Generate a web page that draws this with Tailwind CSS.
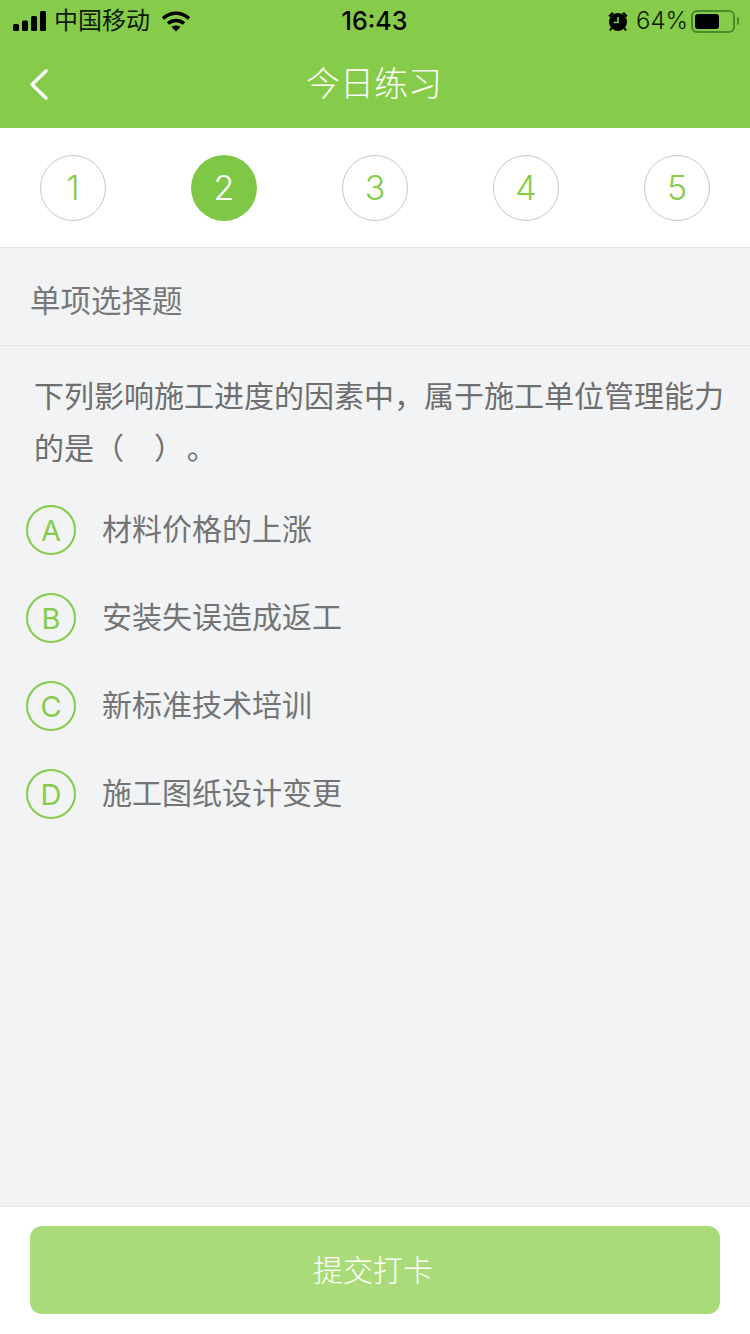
<!DOCTYPE html>
<html lang="zh-CN">
<head>
<meta charset="utf-8">
<script src="https://cdn.jsdelivr.net/npm/@tailwindcss/browser@4"></script>
</head>
<body class="bg-[#f2f3f5]">
<div class="w-[750px] h-[1334px] flex flex-col bg-[#f2f3f5] font-['Inter','Noto_Sans_CJK_SC',sans-serif] overflow-hidden">
  <header class="bg-[#86cc4a] h-[128px] shrink-0 flex flex-col">
    <div class="h-[42px] grid grid-cols-3 items-center pl-[13px] pr-[11px] text-[#0b1a05]">
      <div class="flex items-center">
        <svg width="34" height="20" viewBox="0 0 34 20" fill="#000"><rect x="0" y="13" width="6" height="7" rx="1.5"/><rect x="9" y="9.500" width="6" height="10.500" rx="1.500"/><rect x="18" y="5" width="6" height="15" rx="1.500"/><rect x="27" y="0" width="6" height="20" rx="1.500"/></svg>
        <span class="ml-[7px] text-[24px] leading-none">中国移动</span>
        <svg class="ml-[11px]" width="30" height="22" viewBox="0 0 30 22" fill="none" stroke="#000" stroke-width="3.600"><path d="M2 8.500C9.500 1.500 20.500 1.500 28 8.500"/><path d="M7 13.500C11.500 9.500 18.500 9.500 23 13.500"/><path d="M15 21.500L10.500 17C13 15 17 15 19.500 17Z" fill="#000" stroke="none"/></svg>
      </div>
      <div class="text-center text-[25px] font-medium leading-none text-black pr-[3px]">16:43</div>
      <div class="flex items-center justify-end">
        <svg width="22" height="22" viewBox="0 0 22 22"><path d="M1.500 5.500L5 2 7 3.500 3 7.500ZM20.500 5.500L17 2 15 3.500 19 7.500Z" fill="#000"/><circle cx="11" cy="12" r="9" fill="#000"/><path d="M11 7V12.500H6.500" fill="none" stroke="#86cc4a" stroke-width="1.600"/><path d="M4.500 18L3 20.500M17.500 18L19 20.500" stroke="#000" stroke-width="2"/></svg>
        <span class="ml-[7px] text-[24px] leading-none font-light">64%</span>
        <div class="ml-[3px] w-[44px] h-[23px] rounded-[6px] border-2 border-[#4b8a28] p-[2px] flex">
          <div class="w-[24px] h-full bg-black rounded-[3px]"></div>
        </div>
        <div class="ml-[2px] w-[2px] h-[8px] bg-[#4b8a28] rounded-r-full"></div>
      </div>
    </div>
    <div class="relative flex-1 flex items-center justify-center">
      <svg class="absolute left-[28px] top-[26px]" width="22" height="34" viewBox="0 0 22 34" fill="none" stroke="#fff" stroke-width="3.400" stroke-linecap="round" stroke-linejoin="round"><path d="M18 3L4 16.500L18 30"/></svg>
      <h1 class="text-white text-[34px] leading-none font-light mt-[-2px] pr-[2px]">今日练习</h1>
    </div>
  </header>

  <nav class="h-[120px] shrink-0 bg-white border-b border-[#e6e6e6] px-[40px] flex items-center justify-between">
    <span class="w-[66px] h-[66px] rounded-full border border-[#c8c8c8] flex items-center justify-center text-[34px] font-light text-[#86cc4a]">1</span>
    <span class="w-[66px] h-[66px] rounded-full bg-[#7fc846] flex items-center justify-center text-[34px] font-light text-white">2</span>
    <span class="w-[66px] h-[66px] rounded-full border border-[#c8c8c8] flex items-center justify-center text-[34px] font-light text-[#86cc4a]">3</span>
    <span class="w-[66px] h-[66px] rounded-full border border-[#c8c8c8] flex items-center justify-center text-[34px] font-light text-[#86cc4a]">4</span>
    <span class="w-[66px] h-[66px] rounded-full border border-[#c8c8c8] flex items-center justify-center text-[34px] font-light text-[#86cc4a]">5</span>
  </nav>

  <main class="flex-1 flex flex-col">
    <div class="h-[98px] shrink-0 border-b border-[#e6e6e8] flex items-center pl-[30px] pt-[9px] text-[30.500px] leading-none text-[#777]">单项选择题</div>
    <p class="ml-[34px] mr-[20px] mt-[24px] h-[104px] text-[30px] leading-[52px] text-[#6e6e6e]">下列影响施工进度的因素中，属于施工单位管理能力的是（&emsp;）&#8202;。</p>
    <ul class="mt-[31px] ml-[26px] flex flex-col gap-[38px]">
      <li class="flex items-center h-[50px]"><span class="w-[50px] h-[50px] rounded-full border-2 border-[#86cc4a] flex items-center justify-center pt-[2px] text-[29px] text-[#86cc4a]">A</span><span class="ml-[26px] mt-[-2px] text-[30px] leading-none text-[#747474]">材料价格的上涨</span></li>
      <li class="flex items-center h-[50px]"><span class="w-[50px] h-[50px] rounded-full border-2 border-[#86cc4a] flex items-center justify-center pt-[2px] text-[29px] text-[#86cc4a]">B</span><span class="ml-[26px] mt-[-2px] text-[30px] leading-none text-[#747474]">安装失误造成返工</span></li>
      <li class="flex items-center h-[50px]"><span class="w-[50px] h-[50px] rounded-full border-2 border-[#86cc4a] flex items-center justify-center pt-[2px] text-[29px] text-[#86cc4a]">C</span><span class="ml-[26px] mt-[-2px] text-[30px] leading-none text-[#747474]">新标准技术培训</span></li>
      <li class="flex items-center h-[50px]"><span class="w-[50px] h-[50px] rounded-full border-2 border-[#86cc4a] flex items-center justify-center pt-[2px] text-[29px] text-[#86cc4a]">D</span><span class="ml-[26px] mt-[-2px] text-[30px] leading-none text-[#747474]">施工图纸设计变更</span></li>
    </ul>
  </main>

  <footer class="h-[128px] shrink-0 bg-white border-t border-[#e6e6e8] pt-[19px] px-[30px]">
    <button class="w-full h-[88px] rounded-[12px] bg-[#a9dc78] text-white text-[30px] font-light leading-none pr-[4px]">提交打卡</button>
  </footer>
</div>
</body>
</html>
